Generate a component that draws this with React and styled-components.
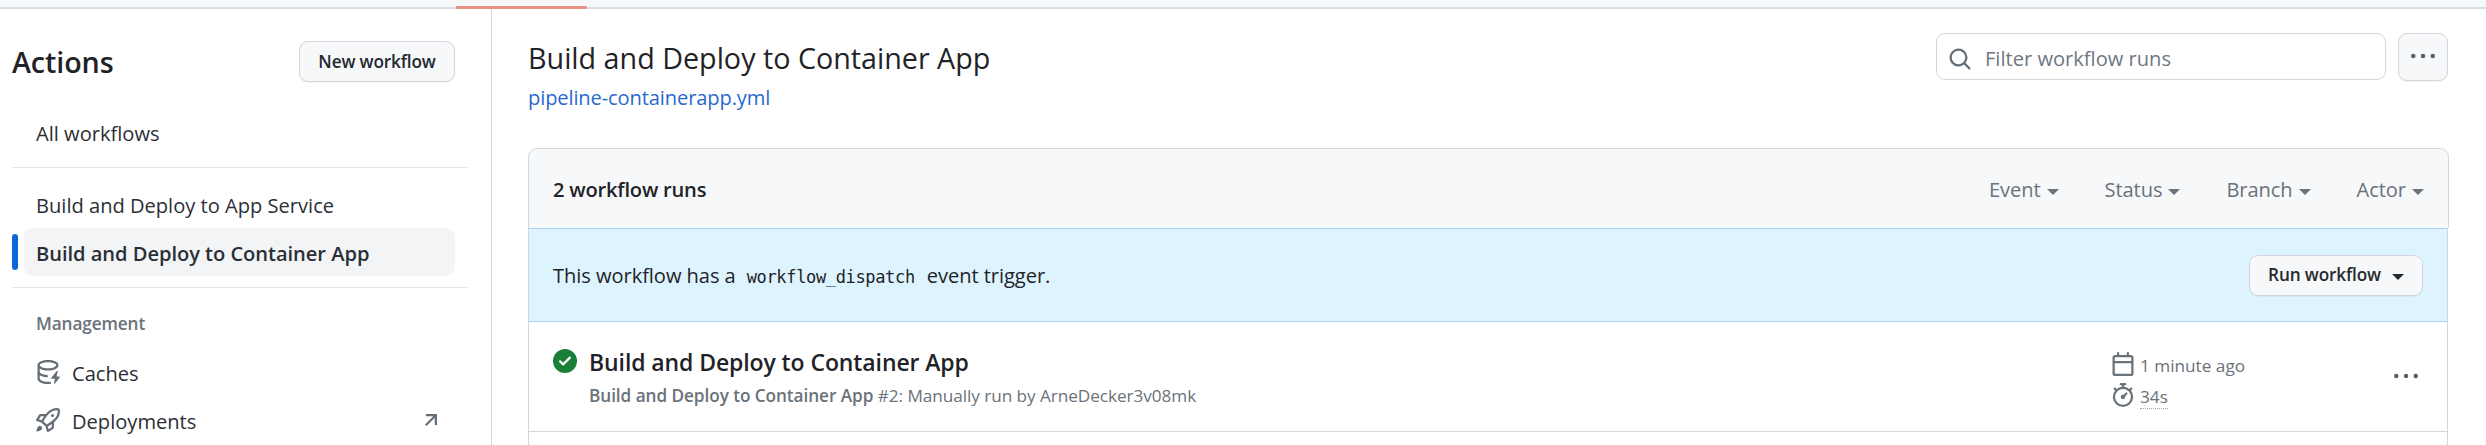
import React from "react";
import styled, { createGlobalStyle } from "styled-components";

const Global = createGlobalStyle`
  *, *::before, *::after { box-sizing: border-box; }
  body {
    margin: 0;
    background: #fff;
    color: #1f2328;
    font-family: "Open Sans", "Noto Sans", sans-serif;
    font-size: 20.1px;
    overflow: hidden;
  }
  h1, h2, h3, p { margin: 0; }
  button, input { font-family: inherit; margin: 0; }
`;

const Page = styled.div`
  height: 445px;
  display: flex;
  flex-direction: column;
  overflow: hidden;
`;

const TopBar = styled.div`
  flex: none;
  height: 9px;
  display: flex;
  align-items: flex-end;
  padding-left: 456px;
  background: #f6f8fa;
  box-shadow: inset 0 -2px #d8dee3;
`;

const ActiveTab = styled.div`
  width: 131px;
  height: 3px;
  border-radius: 1px;
  background: #ec9181;
`;

const Body = styled.div`
  flex: 1;
  display: flex;
  min-height: 0;
`;

const Sidebar = styled.aside`
  flex: none;
  width: 492px;
  padding: 32px 24px 0 12px;
  border-right: 1px solid #d0d7de;
`;

const SidebarHead = styled.div`
  display: flex;
  align-items: center;
  justify-content: space-between;
  height: 41px;
  padding-right: 12px;
  margin-bottom: 26px;
`;

const SidebarTitle = styled.h2`
  font-size: 28.7px;
  font-weight: 600;
  line-height: 40px;
  letter-spacing: -0.1px;
`;

const Button = styled.button`
  display: inline-flex;
  align-items: center;
  justify-content: center;
  gap: 11px;
  width: ${(p) => p.$width}px;
  height: ${(p) => p.$height || 41}px;
  padding: 0;
  border: 1px solid #d3d7db;
  border-radius: 9px;
  background: #f6f8fa;
  box-shadow: 0 1px 1px rgba(31, 35, 40, 0.06);
  color: #24292f;
  font-size: 17.2px;
  font-weight: 600;
  letter-spacing: -0.15px;
  line-height: 38px;
  white-space: nowrap;
`;

const NavItem = styled.div`
  display: flex;
  align-items: center;
  position: relative;
  height: 48px;
  margin: 0 12px;
  padding: 2px 12px 0 12px;
  border-radius: 9px;
  white-space: nowrap;
  color: #2a2f35;
  background: ${(p) => (p.$active ? "#f3f4f6" : "transparent")};
  font-weight: ${(p) => (p.$active ? 600 : 400)};
  letter-spacing: ${(p) => (p.$active ? -0.04 : 0)}px;

  &::before {
    content: ${(p) => (p.$active ? '""' : "none")};
    position: absolute;
    left: -12px;
    top: 6px;
    width: 6px;
    height: 36px;
    border-radius: 9px;
    background: #0969da;
  }

  svg { margin-top: -2px; color: #656d76; }
  svg:last-child { margin-left: auto; }
  svg:first-child { margin-right: 12px; }
`;

const Divider = styled.div`
  height: 1px;
  margin: ${(p) => p.$top}px 0 12px;
  background: #e1e4e8;
`;

const GroupLabel = styled.h3`
  height: 48px;
  padding: 11px 24px 0;
  color: #6a727a;
  font-size: 17.2px;
  font-weight: 600;
  letter-spacing: -0.1px;
  line-height: 26px;
`;

const Main = styled.main`
  flex: 1;
  min-width: 0;
  padding: 24px 37px 0 36px;
`;

const MainHead = styled.header`
  display: flex;
  justify-content: space-between;
  align-items: flex-start;
  height: 115px;
`;

const Title = styled.h1`
  margin-top: 5px;
  font-size: 28.7px;
  font-weight: 400;
  line-height: 40px;
`;

const FileLink = styled.a`
  display: block;
  margin-top: 3px;
  color: #2a69cc;
  letter-spacing: -0.12px;
  line-height: 33px;
`;

const Tools = styled.div`
  display: flex;
  gap: 12px;
  padding-right: 1px;
`;

const SearchBox = styled.label`
  display: flex;
  align-items: center;
  gap: 13px;
  width: 450px;
  height: 47px;
  padding: 4px 12px 0 11px;
  border: 1px solid #d0d7de;
  border-radius: 9px;
  color: #656d76;
`;

const SearchInput = styled.input`
  flex: 1;
  min-width: 0;
  height: 40px;
  padding: 0;
  border: 0;
  outline: 0;
  background: none;
  font-size: 20.1px;
  color: #1f2328;
  &::placeholder { color: #6e7781; opacity: 1; }
`;

const MoreIcon = styled.span`
  display: flex;
  margin-top: ${(p) => p.$shift || 0}px;
  margin-right: ${(p) => p.$inset || 0}px;
  color: #57606a;
`;

const TableHead = styled.div`
  display: flex;
  align-items: center;
  justify-content: space-between;
  height: 80px;
  padding: 2px 24px 0;
  border: 1px solid #d0d7de;
  border-bottom: 0;
  border-radius: 9px 9px 0 0;
  background: #f6f8fa;
`;

const Count = styled.strong`
  font-weight: 600;
  letter-spacing: -0.2px;
`;

const Filters = styled.div`
  display: flex;
  gap: 46px;
`;

const Filter = styled.span`
  display: flex;
  align-items: center;
  gap: 6px;
  color: #6a727a;
  letter-spacing: -0.08px;
`;

const Caret = styled.span`
  width: 0;
  height: 0;
  margin-top: 4px;
  border: 6px solid transparent;
  border-top-color: currentColor;
  border-bottom: 0;
`;

const TableBody = styled.div`
  width: 1920px;
  height: 240px;
  border: solid #d0d7de;
  border-width: 0 1px;
`;

const DispatchBanner = styled.div`
  display: flex;
  align-items: center;
  justify-content: space-between;
  height: 94px;
  padding: 0 24px;
  border: solid #a9d3f0;
  border-width: 1px 0;
  background: #ddf4ff;
`;

const Notice = styled.p`
  letter-spacing: -0.06px;
`;

const Code = styled.code`
  margin: 0 12px 0 11px;
  font-family: "DejaVu Sans Mono", "Liberation Mono", monospace;
  font-size: 17px;
  letter-spacing: -0.35px;
`;

const RunRow = styled.div`
  display: flex;
  height: 110px;
  padding: 27px 24px 0;
  border-bottom: 1px solid #d3d9df;
`;

const StatusIcon = styled.span`
  display: flex;
  width: 36px;
  color: #1a7f37;
`;

const RunInfo = styled.div`
  flex: 1;
  margin-top: -2px;
`;

const RunTitle = styled.h3`
  font-size: 23px;
  font-weight: 600;
  letter-spacing: -0.1px;
  line-height: 30px;
`;

const RunMeta = styled.p`
  margin-top: 5px;
  color: #6a727a;
  font-size: 17.2px;
  letter-spacing: -0.06px;
  line-height: 27px;
`;

const RunName = styled.strong`
  font-weight: 600;
`;

const Times = styled.div`
  width: 283px;
  padding-top: 3px;
  color: #6a727a;
  font-size: 17.2px;
`;

const Time = styled.div`
  display: flex;
  gap: 5px;
  height: 31px;
  line-height: 27px;
`;

const Duration = styled.span`
  height: 26px;
  border-bottom: 1px dotted #a5abb2;
`;

const paths = {
  search:
    "M10.68 11.74a6 6 0 0 1-7.922-8.982 6 6 0 0 1 8.982 7.922l3.04 3.04a.749.749 0 0 1-.326 1.275.749.749 0 0 1-.734-.215ZM11.5 7a4.499 4.499 0 1 0-8.997 0A4.499 4.499 0 0 0 11.5 7Z",
  kebab:
    "M8 9.5a1.5 1.5 0 1 0 0-3 1.5 1.5 0 0 0 0 3ZM1.5 9.5a1.5 1.5 0 1 0 0-3 1.5 1.5 0 0 0 0 3Zm13 0a1.5 1.5 0 1 0 0-3 1.5 1.5 0 0 0 0 3Z",
  calendar:
    "M4.75 0a.75.75 0 0 1 .75.75V2h5V.75a.75.75 0 0 1 1.5 0V2h1.25c.966 0 1.75.784 1.75 1.75v10.5A1.75 1.75 0 0 1 13.25 16H2.75A1.75 1.75 0 0 1 1 14.25V3.75C1 2.784 1.784 2 2.75 2H4V.75A.75.75 0 0 1 4.75 0ZM2.5 7.5v6.75c0 .138.112.25.25.25h10.5a.25.25 0 0 0 .25-.25V7.5Zm10.75-4H2.75a.25.25 0 0 0-.25.25V6h11V3.75a.25.25 0 0 0-.25-.25Z",
  stopwatch:
    "M5.75.75A.75.75 0 0 1 6.5 0h3a.75.75 0 0 1 0 1.5h-.75v1l-.001.041a6.724 6.724 0 0 1 3.464 1.435l.007-.006.75-.75a.749.749 0 0 1 1.275.326.749.749 0 0 1-.215.734l-.75.75-.006.007a6.75 6.75 0 1 1-10.548 0L2.72 5.03l-.75-.75a.751.751 0 0 1 .018-1.042.751.751 0 0 1 1.042-.018l.75.75.007.006A6.72 6.72 0 0 1 7.25 2.541V1.5H6.5a.75.75 0 0 1-.75-.75ZM8 14.5a5.25 5.25 0 1 0-.001-10.501A5.25 5.25 0 0 0 8 14.5Zm.389-6.7 1.33-1.33a.75.75 0 1 1 1.061 1.06L9.45 8.861A1.503 1.503 0 0 1 8 10.75a1.499 1.499 0 1 1 .389-2.95Z",
  success:
    "M8 16A8 8 0 1 1 8 0a8 8 0 0 1 0 16Zm3.78-9.72a.751.751 0 0 0-.018-1.042.751.751 0 0 0-1.042-.018L6.75 9.19 5.28 7.72a.751.751 0 0 0-1.042.018.751.751 0 0 0-.018 1.042l2 2a.75.75 0 0 0 1.06 0Z",
  rocket:
    "M14.064 0h.186C15.216 0 16 .784 16 1.75v.186a8.752 8.752 0 0 1-2.564 6.186l-.458.459c-.314.314-.641.616-.979.904v3.207c0 .608-.315 1.172-.833 1.49l-2.774 1.707a.749.749 0 0 1-1.11-.418l-.954-3.102a1.214 1.214 0 0 1-.145-.125L3.754 9.816a1.218 1.218 0 0 1-.124-.145L.528 8.717a.749.749 0 0 1-.418-1.11l1.71-2.774A1.748 1.748 0 0 1 3.31 4h3.204c.288-.338.59-.665.904-.979l.459-.458A8.749 8.749 0 0 1 14.064 0ZM8.938 3.623h-.002l-.458.458c-.76.76-1.437 1.598-2.02 2.5l-1.5 2.317 2.143 2.143 2.317-1.5c.902-.583 1.74-1.26 2.499-2.02l.459-.458a7.25 7.25 0 0 0 2.123-5.127V1.75a.25.25 0 0 0-.25-.25h-.186a7.249 7.249 0 0 0-5.125 2.123ZM3.56 14.56c-.732.732-2.334 1.045-3.005 1.148a.234.234 0 0 1-.201-.064.234.234 0 0 1-.064-.201c.103-.671.416-2.273 1.15-3.003a1.502 1.502 0 1 1 2.12 2.12Zm6.94-3.935c-.088.06-.177.118-.266.175l-2.35 1.521.548 1.783 1.949-1.2a.25.25 0 0 0 .119-.213ZM3.678 8.116 5.2 5.766c.058-.09.117-.178.176-.266H3.309a.25.25 0 0 0-.213.119l-1.2 1.95ZM12 5a1 1 0 1 1-2 0 1 1 0 0 1 2 0Z",
  cache:
    "M2.5 5.724V8c0 .248.238.7 1.169 1.159.874.43 2.144.745 3.62.822a.75.75 0 1 1-.078 1.498c-1.622-.085-3.102-.432-4.204-.975a5.565 5.565 0 0 1-.507-.28V12.5c0 .133.058.318.282.551.227.237.591.483 1.101.707 1.015.447 2.47.742 4.117.742.406 0 .802-.018 1.183-.052a.751.751 0 1 1 .134 1.494C8.89 15.98 8.45 16 8 16c-1.805 0-3.475-.32-4.721-.869-.623-.274-1.173-.619-1.579-1.041-.408-.425-.7-.964-.7-1.59v-9c0-.626.292-1.165.7-1.591.406-.42.956-.766 1.579-1.04C4.525.32 6.195 0 8 0c1.806 0 3.476.32 4.721.869.623.274 1.173.619 1.579 1.041.408.425.7.964.7 1.59 0 .626-.292 1.165-.7 1.591-.406.42-.956.766-1.578 1.04C11.476 6.68 9.806 7 8 7c-1.805 0-3.475-.32-4.721-.869a6.15 6.15 0 0 1-.779-.407Zm0-2.224c0 .133.058.318.282.551.227.237.591.483 1.101.707C4.898 5.205 6.353 5.5 8 5.5c1.646 0 3.101-.295 4.118-.742.508-.224.873-.471 1.1-.708.224-.232.282-.417.282-.55 0-.133-.058-.318-.282-.551-.227-.237-.591-.483-1.101-.707C11.102 1.795 9.647 1.5 8 1.5c-1.646 0-3.101.295-4.118.742-.508.224-.873.471-1.1.708-.224.232-.282.417-.282.55ZM14.49 7.582a.375.375 0 0 0-.66-.313l-3.625 4.625a.375.375 0 0 0 .295.606h2.127l-.619 2.922a.375.375 0 0 0 .666.304l3.125-4.125A.375.375 0 0 0 15.5 11h-1.778l.769-3.418Z",
  external: "M4.6 4H12v7.4h-1.5V6.56l-5.44 5.5L4 11l5.5-5.5H4.6Z",
};

const Icon = ({ name, size = 24 }) => (
  <svg width={size} height={size} viewBox="0 0 16 16" fill="currentColor" aria-hidden="true">
    <path d={paths[name]} />
  </svg>
);

export default function App() {
  return (
    <Page>
      <Global />
      <TopBar>
        <ActiveTab />
      </TopBar>
      <Body>
        <Sidebar>
          <SidebarHead>
            <SidebarTitle>Actions</SidebarTitle>
            <Button $width={156}>New workflow</Button>
          </SidebarHead>
          <NavItem>All workflows</NavItem>
          <Divider $top={11} />
          <NavItem>Build and Deploy to App Service</NavItem>
          <NavItem $active>Build and Deploy to Container App</NavItem>
          <Divider $top={11} />
          <GroupLabel>Management</GroupLabel>
          <NavItem>
            <Icon name="cache" />
            <span>Caches</span>
          </NavItem>
          <NavItem>
            <Icon name="rocket" />
            <span>Deployments</span>
            <Icon name="external" />
          </NavItem>
        </Sidebar>
        <Main>
          <MainHead>
            <div>
              <Title>Build and Deploy to Container App</Title>
              <FileLink>pipeline-containerapp.yml</FileLink>
            </div>
            <Tools>
              <SearchBox>
                <Icon name="search" />
                <SearchInput placeholder="Filter workflow runs" />
              </SearchBox>
              <Button $width={50} $height={48} aria-label="More options">
                <MoreIcon $shift={-2}>
                  <Icon name="kebab" />
                </MoreIcon>
              </Button>
            </Tools>
          </MainHead>
          <TableHead>
            <Count>2 workflow runs</Count>
            <Filters>
              {["Event", "Status", "Branch", "Actor"].map((label) => (
                <Filter key={label}>
                  {label}
                  <Caret />
                </Filter>
              ))}
            </Filters>
          </TableHead>
          <TableBody>
            <DispatchBanner>
              <Notice>
                This workflow has a<Code>workflow_dispatch</Code>event trigger.
              </Notice>
              <Button $width={174}>
                Run workflow
                <Caret />
              </Button>
            </DispatchBanner>
            <RunRow>
              <StatusIcon>
                <Icon name="success" />
              </StatusIcon>
              <RunInfo>
                <RunTitle>Build and Deploy to Container App</RunTitle>
                <RunMeta>
                  <RunName>Build and Deploy to Container App</RunName> #2: Manually run by ArneDecker3v08mk
                </RunMeta>
              </RunInfo>
              <Times>
                <Time>
                  <Icon name="calendar" />
                  <span>1 minute ago</span>
                </Time>
                <Time>
                  <Icon name="stopwatch" />
                  <Duration>34s</Duration>
                </Time>
              </Times>
              <MoreIcon $shift={15} $inset={5}>
                <Icon name="kebab" />
              </MoreIcon>
            </RunRow>
          </TableBody>
        </Main>
      </Body>
    </Page>
  );
}
